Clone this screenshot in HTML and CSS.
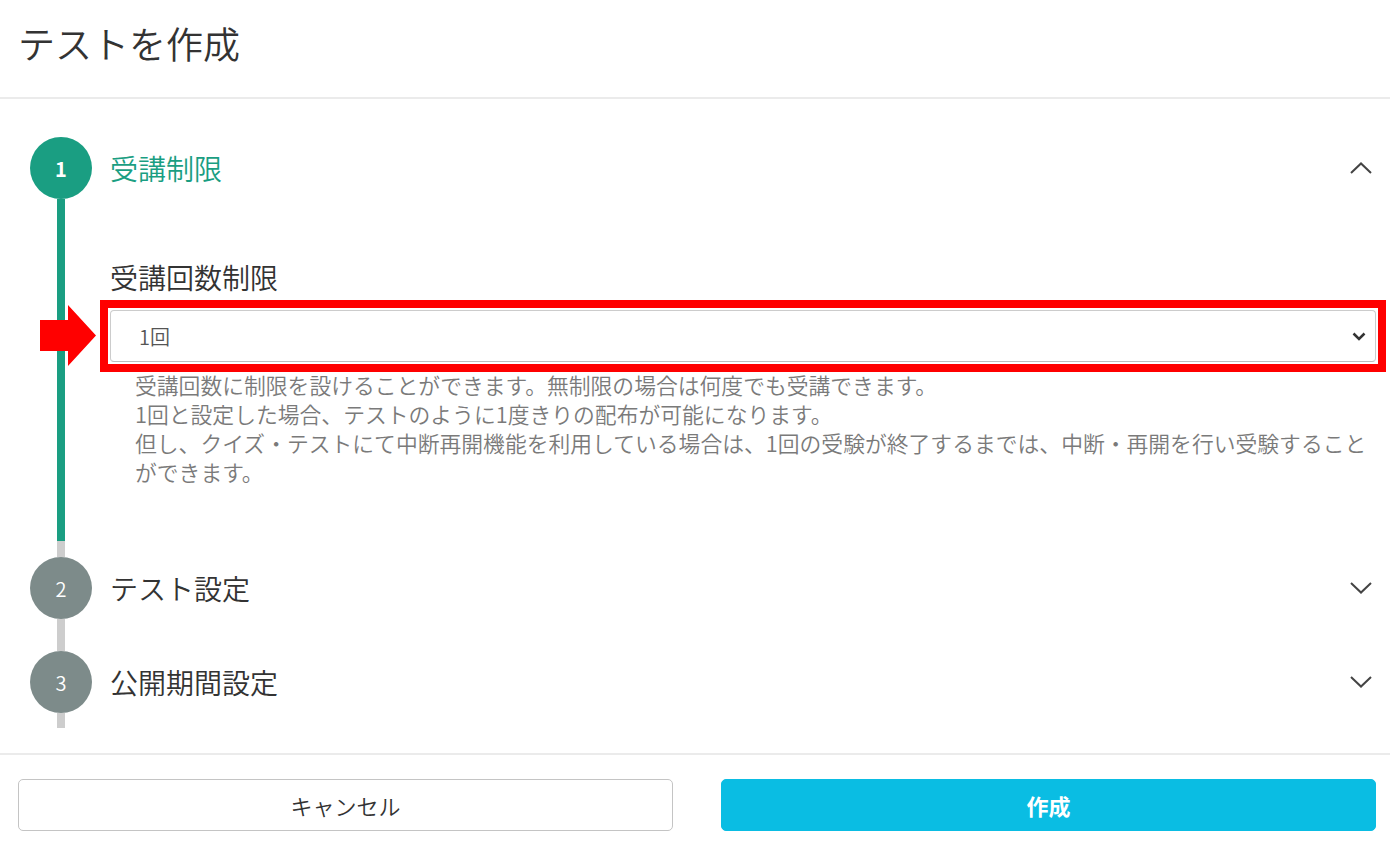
FILE: index.html
```html
<!DOCTYPE html>
<html lang="ja">
<head>
<meta charset="utf-8"/>
<title>テストを作成</title>
<link rel="stylesheet" href="styles.css">
</head>
<body>

<header class="page-head">
  <h1 class="page-title">テストを作成</h1>
</header>

<main class="steps">
  <section class="step step--active">
    <div class="step-rail">
      <div class="step-num">1</div>
      <div class="step-line"></div>
    </div>
    <div class="step-main">
      <div class="step-head">
        <h2 class="step-title">受講制限</h2>
        <svg class="chev" viewBox="0 0 22 12"><polyline points="1,11 11,1.5 21,11"/></svg>
      </div>
      <div class="step-body">
        <label class="field-label">受講回数制限</label>
        <div class="select-wrap">
          <!-- annotation arrow -->
          <svg class="pointer" viewBox="0 0 56 61"><polygon points="0,15 28,15 28,0 56,30.5 28,61 28,46 0,46"/></svg>
          <div class="select">
            <span>1回</span>
            <svg class="select-caret" viewBox="0 0 14 9"><polyline points="1.5,1.5 7,7 12.5,1.5"/></svg>
          </div>
        </div>
        <p class="help">受講回数に制限を設けることができます。無制限の場合は何度でも受講できます。<br>1回と設定した場合、テストのように1度きりの配布が可能になります。<br>但し、クイズ・テストにて中断再開機能を利用している場合は、1回の受験が終了するまでは、中断・再開を行い受験することができます。</p>
      </div>
    </div>
  </section>

  <section class="step step--second">
    <div class="step-rail">
      <div class="step-num">2</div>
      <div class="step-line"></div>
    </div>
    <div class="step-main">
      <div class="step-head">
        <h2 class="step-title">テスト設定</h2>
        <svg class="chev" viewBox="0 0 22 12"><polyline points="1,1 11,10.5 21,1"/></svg>
      </div>
    </div>
  </section>

  <section class="step step--last">
    <div class="step-rail">
      <div class="step-num">3</div>
      <div class="step-line"></div>
    </div>
    <div class="step-main">
      <div class="step-head">
        <h2 class="step-title">公開期間設定</h2>
        <svg class="chev" viewBox="0 0 22 12"><polyline points="1,1 11,10.5 21,1"/></svg>
      </div>
    </div>
  </section>
</main>

<footer class="page-foot">
  <button class="btn btn-cancel" type="button">キャンセル</button>
  <button class="btn btn-create" type="button">作成</button>
</footer>

</body>
</html>
```

FILE: styles.css
```css
body {
  margin: 0;
  background: #fff;
  color: #333;
  font-family: "Noto Sans CJK JP", "Noto Sans", sans-serif;
  font-weight: 350;
}

.page-head {
  padding: 22px 18px 32px;
  border-bottom: 2px solid #ebebeb;
}

.page-title {
  margin: 0;
  font-size: 37px;
  font-weight: 350;
  line-height: 43px;
}

.steps {
  padding: 38px 14px 25px 30px;
}

.step {
  display: flex;
  gap: 18px;
}

.step-rail {
  width: 62px;
  flex-shrink: 0;
  display: flex;
  flex-direction: column;
  align-items: center;
}

.step-num {
  width: 62px;
  height: 62px;
  border-radius: 50%;
  background: #7d8b8a;
  color: #fff;
  display: flex;
  align-items: center;
  justify-content: center;
  font-size: 20px;
}

.step-line {
  flex: 1;
  width: 8px;
  background: #cdcdcd;
}

.step--active .step-num {
  background: #1a9e82;
  font-weight: 700;
}

.step--active .step-line {
  background: linear-gradient(#1a9e82 calc(100% - 16px), #cdcdcd 0);
}

.step--second .step-main {
  padding-bottom: 32px;
}

.step--last .step-main {
  padding-bottom: 15px;
}

.step-main {
  flex: 1;
  min-width: 0;
}

.step-head {
  height: 62px;
  display: flex;
  align-items: center;
  justify-content: space-between;
}

.step-title {
  margin: 0;
  font-size: 28px;
  font-weight: 350;
}

.step--active .step-title {
  color: #1a9e82;
}

.chev {
  width: 22px;
  height: 12px;
  margin-right: 4px;
  fill: none;
  stroke: #444;
  stroke-width: 2;
}

.step-body {
  padding: 58px 0 71px;
}

.field-label {
  display: block;
  font-size: 28px;
  line-height: 40px;
  margin-bottom: 13px;
}

.select-wrap {
  position: relative;
  outline: 8px solid #f00;
  outline-offset: 2px;
}

.pointer {
  position: absolute;
  left: -70px;
  top: -5px;
  width: 56px;
  height: 61px;
  fill: #f00;
}

.select {
  height: 52px;
  box-sizing: border-box;
  border: 1px solid #ccc;
  border-bottom-color: #bdbdbd;
  border-radius: 4px;
  display: flex;
  align-items: center;
  justify-content: space-between;
  padding: 0 9px 0 28px;
  font-size: 20px;
  color: #555;
}

.select-caret {
  width: 14px;
  height: 9px;
  fill: none;
  stroke: #333;
  stroke-width: 2.5;
}

.help {
  margin: 8px 0 0;
  padding-left: 25px;
  font-size: 21.8px;
  line-height: 29px;
  color: #7a7a7a;
}

.page-foot {
  border-top: 2px solid #ebebeb;
  padding: 24px 14px 18px 18px;
  display: grid;
  grid-template-columns: 1fr 1fr;
  gap: 48px;
}

.btn {
  height: 52px;
  border-radius: 5px;
  font-family: inherit;
  font-size: 22px;
  font-weight: 350;
  cursor: pointer;
}

.btn-cancel {
  background: #fff;
  border: 1px solid #c4c4c4;
  color: #333;
}

.btn-create {
  background: #0abde3;
  border: 1px solid #0abde3;
  color: #fff;
  font-weight: 700;
}
```
